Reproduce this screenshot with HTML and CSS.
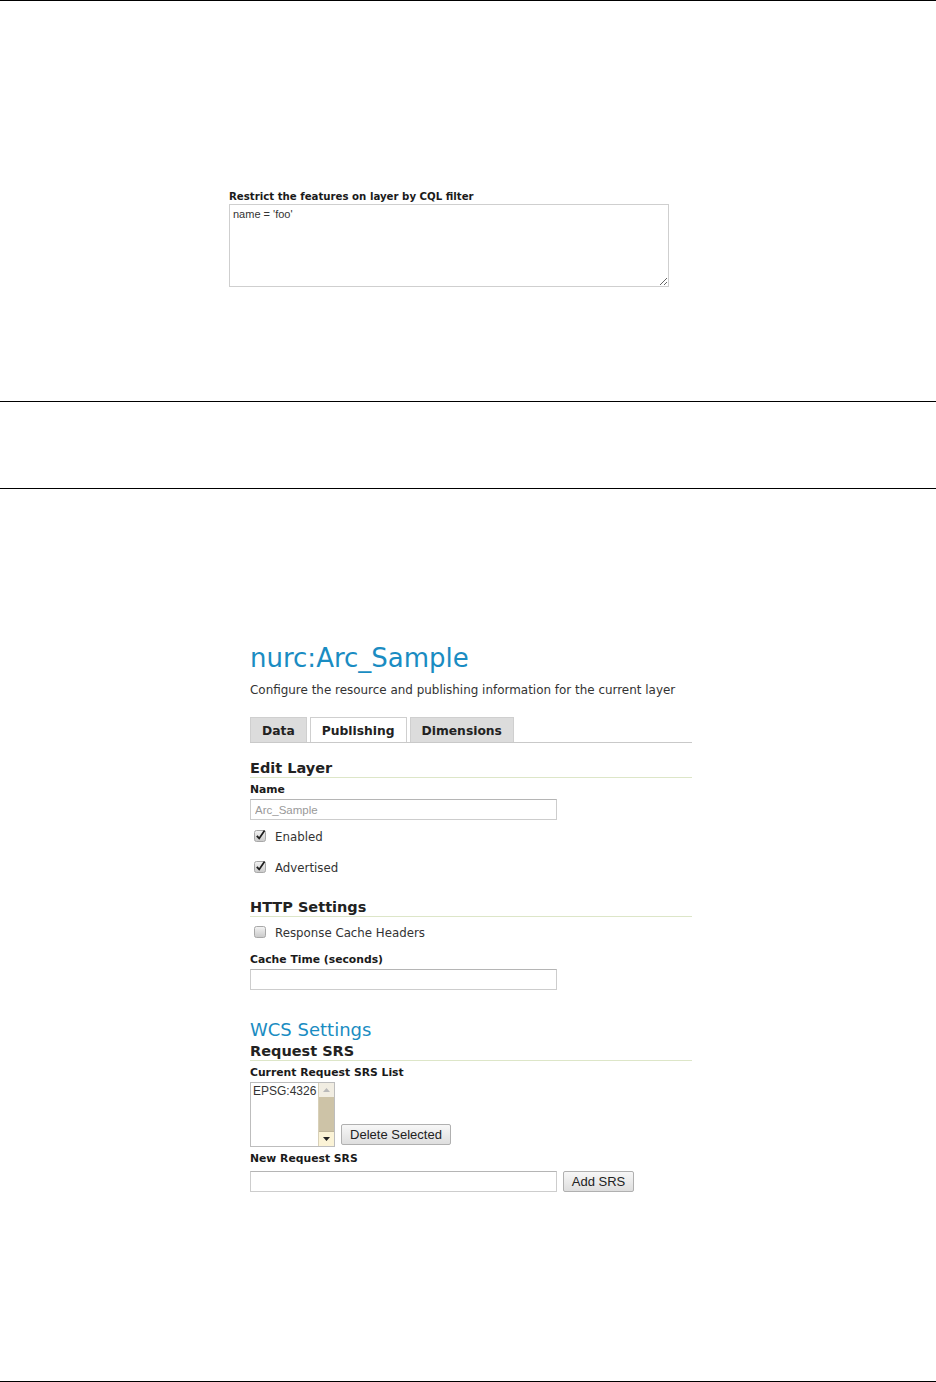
FILE: index.html
```html
<!DOCTYPE html>
<html>
<head>
    <title>Layer publishing</title>
    <link rel="stylesheet" href="styles.css">
</head>
<body>
    <div class="shot shot-cql">
        <div class="cql">
            <label class="cql-label" for="cql">Restrict the features on layer by CQL filter</label>
            <textarea id="cql" class="cql-input" readonly>name = 'foo'</textarea>
        </div>
    </div>

    <div class="shot-gap"></div>

    <div class="shot shot-layer">
        <div class="layer">
            <h1 class="page-title">nurc:Arc_Sample</h1>
            <p class="page-desc">Configure the resource and publishing information for the current layer</p>

            <div class="tabs">
                <div class="tab">Data</div>
                <div class="tab tab-active">Publishing</div>
                <div class="tab">Dimensions</div>
            </div>

            <h3 class="section-title section-first">Edit Layer</h3>
            <div class="field-label">Name</div>
            <input type="text" class="text-input" placeholder="Arc_Sample">

            <div class="check check-first">
                <svg class="check-box" width="13" height="13" viewBox="0 0 13 13">
                    <defs>
                        <linearGradient id="cbg" x1="0" y1="0" x2="0" y2="1">
                            <stop offset="0" stop-color="#f4f4f4"/>
                            <stop offset="1" stop-color="#c9c9c9"/>
                        </linearGradient>
                    </defs>
                    <rect x="0.5" y="1.5" width="11" height="11" rx="2" fill="url(#cbg)" stroke="#a8a8a8"/>
                    <path d="M2.8 6.8 L5.2 9.4 L10.6 1.6" fill="none" stroke="#1e1e1e" stroke-width="1.8"/>
                </svg>
                <span>Enabled</span>
            </div>
            <div class="check check-next">
                <svg class="check-box" width="13" height="13" viewBox="0 0 13 13">
                    <rect x="0.5" y="1.5" width="11" height="11" rx="2" fill="url(#cbg)" stroke="#a8a8a8"/>
                    <path d="M2.8 6.8 L5.2 9.4 L10.6 1.6" fill="none" stroke="#1e1e1e" stroke-width="1.8"/>
                </svg>
                <span>Advertised</span>
            </div>

            <h3 class="section-title section-http">HTTP Settings</h3>
            <div class="check check-http">
                <svg class="check-box" width="13" height="13" viewBox="0 0 13 13">
                    <rect x="0.5" y="1.5" width="11" height="11" rx="2" fill="url(#cbg)" stroke="#a8a8a8"/>
                </svg>
                <span>Response Cache Headers</span>
            </div>
            <div class="field-label label-cache">Cache Time (seconds)</div>
            <input type="text" class="text-input">

            <h2 class="sub-title">WCS Settings</h2>
            <h3 class="section-title section-srs">Request SRS</h3>
            <div class="field-label label-srs">Current Request SRS List</div>
            <div class="srs-row">
                <div class="srs-list">
                    <div class="srs-options">EPSG:4326</div>
                    <div class="scrollbar">
                        <div class="sb-btn sb-up">
                            <svg width="7" height="4" viewBox="0 0 7 4"><path d="M0 4 L3.5 0 L7 4 Z" fill="#b9b9b9"/></svg>
                        </div>
                        <div class="sb-track"></div>
                        <div class="sb-btn sb-down">
                            <svg width="7" height="4" viewBox="0 0 7 4"><path d="M0 0 L3.5 4 L7 0 Z" fill="#222"/></svg>
                        </div>
                    </div>
                </div>
                <button class="btn btn-delete">Delete Selected</button>
            </div>
            <div class="field-label label-new">New Request SRS</div>
            <div class="add-row">
                <input type="text" class="text-input">
                <button class="btn btn-add">Add SRS</button>
            </div>
        </div>
    </div>
</body>
</html>
```

FILE: styles.css
```css
body {
    margin: 0;
    background: #fff;
    font-family: 'DejaVu Sans', Verdana, sans-serif;
    color: #222;
}
.shot {
    border-top: 1px solid #000;
}
.shot-cql {
    height: 400px;
}
.shot-gap {
    height: 86px;
    border-top: 1px solid #000;
}
.shot-layer {
    height: 892px;
    border-bottom: 1px solid #000;
}

/* first screenshot: CQL filter */
.cql {
    padding-top: 189px;
    margin-left: 229px;
    width: 440px;
}
.cql-label {
    display: block;
    font-size: 10.2px;
    font-weight: bold;
    line-height: 13px;
    color: #1a1a1a;
}
.cql-input {
    display: block;
    box-sizing: border-box;
    width: 440px;
    height: 83px;
    margin: 1px 0 0;
    padding: 3px 3px;
    border: 1px solid #cfcfcf;
    font-family: 'Liberation Sans', Arial, sans-serif;
    font-size: 11px;
    color: #333;
    outline: none;
}

/* second screenshot: layer publishing */
.layer {
    padding-top: 154px;
    margin-left: 250px;
    width: 442px;
}
.page-title {
    margin: 0;
    font-size: 26px;
    font-weight: normal;
    line-height: 30px;
    color: #1a8cc2;
}
.page-desc {
    margin: 9px 0 0;
    font-size: 11.95px;
    line-height: 16px;
    color: #333;
}
.tabs {
    display: flex;
    gap: 3px;
    margin-top: 19px;
    border-bottom: 1px solid #c9c9c9;
}
.tab {
    height: 24px;
    padding: 0 11px;
    border: 1px solid #cfcfcf;
    border-bottom: none;
    background: #dcdcdc;
    font-size: 12.3px;
    font-weight: bold;
    line-height: 26px;
    color: #222;
}
.tab-active {
    background: #fff;
}
.section-title {
    margin: 0;
    font-size: 14.5px;
    font-weight: bold;
    line-height: 17px;
    color: #222;
    border-bottom: 1px solid #dde6c8;
}
.section-first {
    margin-top: 17px;
}
.section-http {
    margin-top: 23px;
}
.section-srs {
    margin-top: 2px;
}
.field-label {
    margin-top: 5px;
    font-size: 10.8px;
    font-weight: bold;
    line-height: 14px;
    color: #1a1a1a;
}
.label-cache {
    margin-top: 12px;
}
.label-srs {
    margin-top: 5px;
}
.label-new {
    margin-top: 5px;
}
.text-input {
    display: block;
    box-sizing: border-box;
    width: 307px;
    height: 21px;
    margin: 2px 0 0;
    padding: 0 4px;
    border: 1px solid #cdcdcd;
    border-top-color: #b5b5b5;
    font-family: 'Liberation Sans', Arial, sans-serif;
    font-size: 11.5px;
    color: #333;
    outline: none;
}
.text-input::placeholder {
    color: #999;
}
.check {
    display: flex;
    align-items: center;
    gap: 8px;
    padding-left: 4px;
    font-size: 11.8px;
    line-height: 16px;
    color: #333;
}
.check-box {
    display: block;
    margin-top: -4px;
}
.check-first {
    margin-top: 9px;
}
.check-next {
    margin-top: 15px;
}
.check-http {
    margin-top: 8px;
}
.sub-title {
    margin: 29px 0 0;
    font-size: 18px;
    font-weight: normal;
    line-height: 22px;
    color: #1a8cc2;
}
.srs-row {
    display: flex;
    align-items: flex-end;
    margin-top: 2px;
}
.srs-list {
    display: flex;
    box-sizing: border-box;
    width: 85px;
    height: 65px;
    border: 1px solid #bdbdbd;
    background: #fff;
}
.srs-options {
    flex: 1;
    padding: 1px 2px;
    font-family: 'Liberation Sans', Arial, sans-serif;
    font-size: 12px;
    line-height: 14px;
    color: #333;
}
.scrollbar {
    display: flex;
    flex-direction: column;
    width: 15px;
    border-left: 1px solid #d8d0b8;
}
.sb-btn {
    display: flex;
    align-items: center;
    justify-content: center;
    height: 14px;
}
.sb-up {
    background: #f1ede2;
}
.sb-down {
    background: #fbf3d6;
    border-top: 1px solid #bfb59a;
}
.sb-track {
    flex: 1;
    background: #cdc3a7;
}
.btn {
    box-sizing: border-box;
    height: 21px;
    padding: 0 7px;
    border: 1px solid #b0b0b0;
    border-radius: 2px;
    background: linear-gradient(#f7f7f7, #dedede);
    font-family: 'Liberation Sans', Arial, sans-serif;
    font-size: 13px;
    line-height: 19px;
    color: #222;
}
.btn-delete {
    width: 110px;
    margin: 0 0 2px 6px;
}
.add-row {
    display: flex;
    gap: 6px;
    margin-top: 5px;
}
.add-row .text-input {
    margin: 0;
}
.btn-add {
    width: 71px;
}
```
